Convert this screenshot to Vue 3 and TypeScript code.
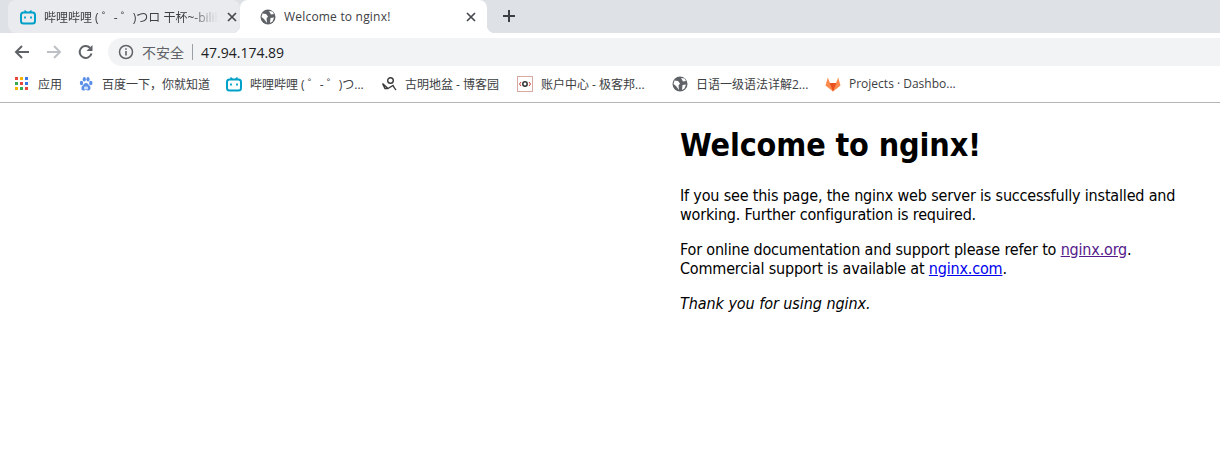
<script setup lang="ts">
const bookmarks = [
  { icon: 'apps', label: '应用', width: 63 },
  { icon: 'baidu', label: '百度一下，你就知道', width: 148 },
  { icon: 'bili', label: '哔哩哔哩 ( ゜- ゜)つ...', width: 155 },
  { icon: 'blog', label: '古明地盆 - 博客园', width: 136 },
  { icon: 'geek', label: '账户中心 - 极客邦...', width: 155 },
  { icon: 'globe', label: '日语一级语法详解2...', width: 153 },
  { icon: 'fox', label: 'Projects · Dashbo...', width: 150 },
]
const appColors = ['#e8453c', '#f4b400', '#3b78e7', '#34a853', '#e8453c', '#3b78e7', '#f4b400', '#34a853', '#e8453c']
</script>

<template>
  <div class="page">
    <div class="tabstrip">
      <div class="tab">
        <svg class="fav" viewBox="0 0 16 16"><path d="M4.500 1.500 6.500 3.500M11.500 1.500 9.500 3.500" stroke="#00a1c9" stroke-width="1.600" fill="none"/><rect x="1" y="3.500" width="14" height="11" rx="2.500" fill="none" stroke="#00a1c9" stroke-width="2"/><path d="M5 7.500v2M11 7.500v2" stroke="#00a1c9" stroke-width="1.800"/></svg>
        <span class="tab-title fade">哔哩哔哩 ( ゜- ゜)つロ 干杯~-bilibili</span>
        <svg class="close" viewBox="0 0 10 10"><path d="M1 1l8 8M9 1l-8 8" stroke="#45494e" stroke-width="1.700"/></svg>
      </div>
      <div class="tab active">
        <svg class="fav" viewBox="0 0 16 16"><circle cx="8" cy="8" r="7.500" fill="#5f6368"/><path d="M2.500 4.500 6 5l2 2.500-1.500 2 .5 4.500L4 10 1.500 8zM9 2l3.500.5L14 5l-3 .5zM10.500 9l3.500-.5-1.500 4L10 14z" fill="#fff"/></svg>
        <span class="tab-title">Welcome to nginx!</span>
        <svg class="close" viewBox="0 0 10 10"><path d="M1 1l8 8M9 1l-8 8" stroke="#45494e" stroke-width="1.700"/></svg>
      </div>
      <svg class="plus" viewBox="0 0 14 14"><path d="M7 1v12M1 7h12" stroke="#3c4043" stroke-width="2"/></svg>
    </div>

    <div class="toolbar">
      <svg class="nav" viewBox="0 0 16 16"><path d="M15 8H2M8 2 2 8l6 6" fill="none" stroke="#5f6368" stroke-width="2"/></svg>
      <svg class="nav" viewBox="0 0 16 16"><path d="M1 8h13M8 2l6 6-6 6" fill="none" stroke="#bdc1c6" stroke-width="2"/></svg>
      <svg class="nav" viewBox="0 0 16 16"><path d="M13.500 9.500A6 6 0 1 1 12 3.800" fill="none" stroke="#5f6368" stroke-width="2"/><path d="M14.500 1v6h-6z" fill="#5f6368"/></svg>
      <div class="omnibox">
        <svg class="info" viewBox="0 0 16 16"><circle cx="8" cy="8" r="6.500" fill="none" stroke="#5f6368" stroke-width="1.500"/><path d="M8 7v4.500M8 4.300v1.500" stroke="#5f6368" stroke-width="1.600"/></svg>
        <span class="insecure">不安全</span>
        <span class="sep"></span>
        <span class="url">47.94.174.89</span>
      </div>
    </div>

    <div class="bookmarks">
      <div v-for="b in bookmarks" :key="b.label" class="bookmark" :style="{ width: b.width + 'px' }">
        <span v-if="b.icon === 'apps'" class="apps">
          <i v-for="(c, i) in appColors" :key="i" :style="{ background: c }"></i>
        </span>
        <svg v-else-if="b.icon === 'baidu'" class="fav" viewBox="0 0 16 16" fill="#5b8fe8"><ellipse cx="3.500" cy="7" rx="1.700" ry="2.200"/><ellipse cx="6.300" cy="3.200" rx="1.600" ry="2.200"/><ellipse cx="10" cy="3.200" rx="1.600" ry="2.200"/><ellipse cx="12.800" cy="7" rx="1.700" ry="2.200"/><path d="M8 7c2 0 2.500 2 3.800 3s1 4.500-1.500 4.500c-1.300 0-1.300-.5-2.300-.5s-1.200.5-2.700.5C3 14.500 3 11 4.300 10S6 7 8 7z"/><rect x="6" y="10.500" width="4" height="3" rx="1" fill="#cfe0fa"/></svg>
        <svg v-else-if="b.icon === 'bili'" class="fav" viewBox="0 0 16 16"><path d="M4.500 1.500 6.500 3.500M11.500 1.500 9.500 3.500" stroke="#00a1c9" stroke-width="1.600" fill="none"/><rect x="1" y="3.500" width="14" height="11" rx="2.500" fill="none" stroke="#00a1c9" stroke-width="2"/><path d="M5 7.500v2M11 7.500v2" stroke="#00a1c9" stroke-width="1.800"/></svg>
        <svg v-else-if="b.icon === 'blog'" class="fav" viewBox="0 0 16 16" fill="none" stroke="#3a3a3a" stroke-width="1.400"><circle cx="9.500" cy="4.500" r="2.800"/><path d="M1.500 7.500 7 12.500 12 9.500c1 2 1.500 3 3 4.500M1.500 7.500 4 12.500 7 12.500"/></svg>
        <svg v-else-if="b.icon === 'geek'" class="fav" viewBox="0 0 16 16"><rect x=".5" y=".5" width="15" height="15" fill="#fff" stroke="#d9a9a0"/><path d="M4 6 2.500 8 4 10M12 6l1.500 2-1.500 2" fill="none" stroke="#c43c2c"/><circle cx="8" cy="8" r="2.200" fill="none" stroke="#333" stroke-width="1.500"/></svg>
        <svg v-else-if="b.icon === 'globe'" class="fav" viewBox="0 0 16 16"><circle cx="8" cy="8" r="7.500" fill="#5f6368"/><path d="M2.500 4.500 6 5l2 2.500-1.500 2 .5 4.500L4 10 1.500 8zM9 2l3.500.5L14 5l-3 .5zM10.500 9l3.500-.5-1.500 4L10 14z" fill="#fff"/></svg>
        <svg v-else class="fav" viewBox="0 0 16 16"><path d="M8 15.500 .5 9.500 2.800 1.500 5 7h6l2.200-5.500 2.300 8z" fill="#fc8a4c"/><path d="M8 15.500 4.700 7h6.600z" fill="#e8501f"/></svg>
        <span class="bookmark-label">{{ b.label }}</span>
      </div>
    </div>

    <main class="content">
      <h1>Welcome to nginx!</h1>
      <p>If you see this page, the nginx web server is successfully installed and working. Further configuration is required.</p>
      <p>For online documentation and support please refer to <a class="visited" href="#">nginx.org</a>.<br>Commercial support is available at <a href="#">nginx.com</a>.</p>
      <p class="thanks"><em>Thank you for using nginx.</em></p>
    </main>
  </div>
</template>

<style>
html, body { background: #fff; }
</style>

<style scoped>
.page {
  width: 1220px;
  height: 466px;
  overflow: hidden;
  background: #fff;
  font-family: "Noto Sans CJK SC", "Noto Sans", sans-serif;
}
.tabstrip {
  height: 33px;
  background: #dee1e6;
  display: flex;
  align-items: flex-end;
  padding-left: 8px;
}
.tab {
  position: relative;
  width: 232px;
  height: 33px;
  box-sizing: border-box;
  padding: 0 3px 0 12px;
  display: flex;
  align-items: center;
  background: #e9ebee;
  border-radius: 8px 8px 8px 8px;
  color: #3c4043;
  font-size: 12px;
}
.tab.active {
  width: 247px;
  background: #fff;
  padding: 0 11px 0 20px;
  border-radius: 8px 8px 0 0;
}
/* little curved feet at the bottom of the selected tab */
.tab.active::before,
.tab.active::after {
  content: "";
  position: absolute;
  bottom: 0;
  width: 8px;
  height: 8px;
}
.tab.active::before {
  left: -8px;
  background: radial-gradient(circle at 0 0, transparent 8px, #fff 8.500px);
}
.tab.active::after {
  right: -8px;
  background: radial-gradient(circle at 100% 0, transparent 8px, #fff 8.500px);
}
.fav {
  width: 16px;
  height: 16px;
  flex: none;
}
.tab-title {
  flex: 1;
  margin-left: 8px;
  white-space: nowrap;
  overflow: hidden;
  letter-spacing: 0.2px;
  font-family: "Open Sans", "Noto Sans CJK SC", sans-serif;
}
.fade {
  margin-right: 9px;
  letter-spacing: 0;
  -webkit-mask-image: linear-gradient(to right, #000 84%, transparent);
  mask-image: linear-gradient(to right, #000 84%, transparent);
}
.close {
  width: 10px;
  height: 10px;
  flex: none;
}
.plus {
  width: 14px;
  height: 14px;
  margin: 0 0 10px 15px;
}
.toolbar {
  height: 33px;
  background: #fff;
  display: flex;
  align-items: center;
  padding-left: 14px;
  box-sizing: border-box;
  padding-top: 5px;
}
.nav {
  width: 16px;
  height: 16px;
  margin-right: 16px;
}
.omnibox {
  flex: 1;
  height: 28px;
  margin-left: -2px;
  background: #f1f3f4;
  border-radius: 14px 0 0 14px;
  display: flex;
  align-items: center;
  padding-left: 10px;
  font-size: 14px;
}
.info {
  width: 16px;
  height: 16px;
}
.insecure {
  margin-left: 8px;
  color: #5f6368;
}
.sep {
  width: 1px;
  height: 16px;
  margin: 0 8px;
  background: #9aa0a6;
}
.url {
  color: #202124;
  font-family: "Open Sans", sans-serif;
}
.bookmarks {
  height: 37px;
  box-sizing: border-box;
  padding-left: 15px;
  padding-bottom: 1px;
  display: flex;
  align-items: center;
  border-bottom: 1px solid #b5b5b5;
}
.bookmark {
  display: flex;
  align-items: center;
  flex: none;
  font-size: 12px;
  color: #3c4043;
}
.bookmark-label {
  margin-left: 8px;
  white-space: nowrap;
  font-family: "Open Sans", "Noto Sans CJK SC", sans-serif;
}
.apps {
  width: 15px;
  height: 14px;
  display: grid;
  grid-template-columns: repeat(3, 3px);
  grid-auto-rows: 3px;
  gap: 2px;
}
.content {
  padding-left: 680px;
  padding-right: 40px;
  color: #000;
  font-family: "DejaVu Sans", sans-serif;
  font-stretch: condensed;
  font-size: 16px;
  line-height: 19px;
  letter-spacing: -0.18px;
}
h1 {
  margin: 0 0 21px;
  padding-top: 23px;
  font-size: 32px;
  line-height: 39px;
  font-weight: 700;
  letter-spacing: -0.12px;
}
p {
  margin: 16px 0;
}
.thanks {
  letter-spacing: -0.06px;
}
a {
  color: #0000ee;
}
a.visited {
  color: #551a8b;
}
</style>
